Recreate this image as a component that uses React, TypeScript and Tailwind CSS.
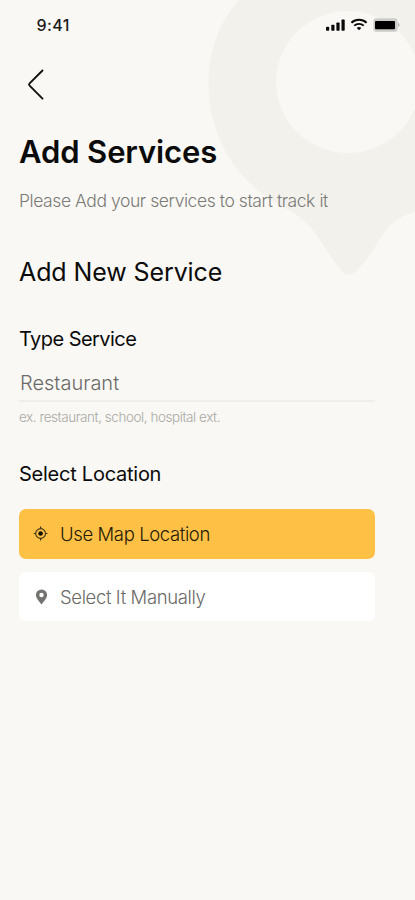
import React, { useState } from 'react';

const StatusBar = () => (
  <header className="flex h-[50px] items-center justify-between pl-[36.500px] pr-[14px]">
    <span className="text-[16px] font-medium leading-5 tracking-[0.4px] text-[#1c1c1a]">9:41</span>
    <svg width="76" height="20" viewBox="0 0 76 20" fill="none" aria-hidden="true">
      <g fill="#0a0a0a">
        <rect x="1" y="11.7" width="3.2" height="4" rx="0.8" />
        <rect x="6.3" y="9.8" width="3.2" height="5.9" rx="0.8" />
        <rect x="11.4" y="7.4" width="3.2" height="8.3" rx="0.8" />
        <rect x="16.5" y="4.4" width="3.2" height="11.3" rx="0.8" />
        <path d="M34 12a3.4 3.4 0 0 1 2.3.9L34 15.3l-2.3-2.4A3.4 3.4 0 0 1 34 12Z" />
      </g>
      <path d="M26.4 7.7a11 11 0 0 1 15.2 0" stroke="#0a0a0a" strokeWidth="2" />
      <path d="M29.2 10.7a7 7 0 0 1 9.6 0" stroke="#0a0a0a" strokeWidth="1.8" />
      <rect x="48.4" y="3.2" width="24.2" height="13.6" rx="3.4" fill="#cbcbc8" />
      <rect x="50" y="6" width="20" height="8.200" rx="1" fill="#000" />
      <path d="M73.200 7.800c1.800.6 1.800 3.600 0 4.200Z" fill="#b0b0ad" />
    </svg>
  </header>
);

const BackgroundPin = () => (
  <svg className="absolute right-0 top-0" width="215" height="290" viewBox="200 0 215 290" aria-hidden="true">
    <path
      fill="#f2f1ec"
      fillRule="evenodd"
      d="M239 0C219 22 208.500 52 208.500 84C208.500 122 224 159 251 184C269 203 290 208 302 219C317 231 326 252 341 270Q348 279 356 271C367 262 374 247 384 233C393 220 403 215 415 212V0ZM348 11A72 71 0 1 0 348 153A72 71 0 1 0 348 11Z"
    />
  </svg>
);

const TargetIcon = () => (
  <svg width="16" height="16" viewBox="0 0 16 16" fill="none" aria-hidden="true">
    <circle cx="7.600" cy="7.500" r="4.900" stroke="#43351a" strokeWidth="1.1" />
    <circle cx="7.600" cy="7.500" r="2.300" fill="#140f05" />
    <path d="M7.600.6v2.200M7.600 12.200v2.200M.7 7.500h2.200M12.300 7.500h2.200" stroke="#43351a" strokeWidth="1.2" />
  </svg>
);

const PinIcon = () => (
  <svg width="16" height="16" viewBox="0 0 16 16" aria-hidden="true">
    <path
      fill="#74736f"
      fillRule="evenodd"
      d="M8.500.4A5.600 5.600 0 0 0 2.900 6c0 3.700 3.700 6.500 5.600 9.500C10.400 12.500 14.100 9.700 14.100 6A5.600 5.600 0 0 0 8.500.4Zm0 3.400a2.200 2.200 0 1 1 0 4.400 2.200 2.200 0 0 1 0-4.400Z"
    />
  </svg>
);

const App = () => {
  const [service, setService] = useState('Restaurant');

  return (
    <div className="relative h-[900px] w-full overflow-hidden bg-[#f9f8f4] font-['Inter','Liberation_Sans',sans-serif] text-[#0b0b0b]">
      <BackgroundPin />
      <div className="relative">
        <StatusBar />
        <main className="flex flex-col pl-[19px] pr-10">
          <button type="button" aria-label="Back" className="mt-[18px] ml-[7px] h-[34px] w-5">
            <svg width="20" height="34" viewBox="0 0 20 34" fill="none">
              <path d="M16.500 2.500 3.600 15.300Q2.500 16.500 3.600 17.700L16.500 30.700" stroke="#111" strokeWidth="1.900" strokeLinecap="round" />
            </svg>
          </button>

          <h1 className="mt-[30px] h-10 whitespace-nowrap text-[31px] font-semibold leading-10 tracking-[-0.12px]">Add Services</h1>
          <p className="mt-[17px] h-6 whitespace-nowrap text-[17.500px] font-[350] leading-6 tracking-[-0.43px] text-[#7b7a77]">
            Please Add your services to start track it
          </p>

          <h2 className="mt-[43px] h-8 whitespace-nowrap text-[25px] leading-8 tracking-[-0.1px]">Add New Service</h2>

          <label htmlFor="service" className="mt-[37px] h-7 whitespace-nowrap text-[20px] leading-7 tracking-[-0.55px]">
            Type Service
          </label>
          <input
            id="service"
            value={service}
            onChange={(e) => setService(e.target.value)}
            className="mt-4 h-[33px] w-full border-b-2 border-[#efeeea] pb-[3px] pl-px text-[20px] font-[350] leading-7 tracking-[0px] text-[#6b6a67] outline-none"
          />
          <p className="mt-[5px] h-5 whitespace-nowrap text-[13.500px] font-light leading-5 tracking-[-0.45px] text-[#aaa9a5]">
            ex. restaurant, school, hospital ext.
          </p>

          <h3 className="mt-[33px] h-7 whitespace-nowrap text-[20px] leading-7 tracking-[-0.25px]">Select Location</h3>
          <button type="button" className="mt-[21px] flex h-[50px] items-center rounded-[7px] bg-[#ffc145] pl-[14px] text-[18.500px] font-[350] leading-7 tracking-[-0.38px] text-[#251b08]">
            <TargetIcon />
            <span className="ml-[11px] whitespace-nowrap">Use Map Location</span>
          </button>
          <button type="button" className="mt-[13px] flex h-[49px] items-center rounded-[7px] bg-white pl-[14px] text-[18.500px] font-[350] leading-7 tracking-[-0.38px] text-[#6b6a67]">
            <PinIcon />
            <span className="ml-[11px] whitespace-nowrap">Select It Manually</span>
          </button>
        </main>
      </div>
    </div>
  );
};

export default App;
